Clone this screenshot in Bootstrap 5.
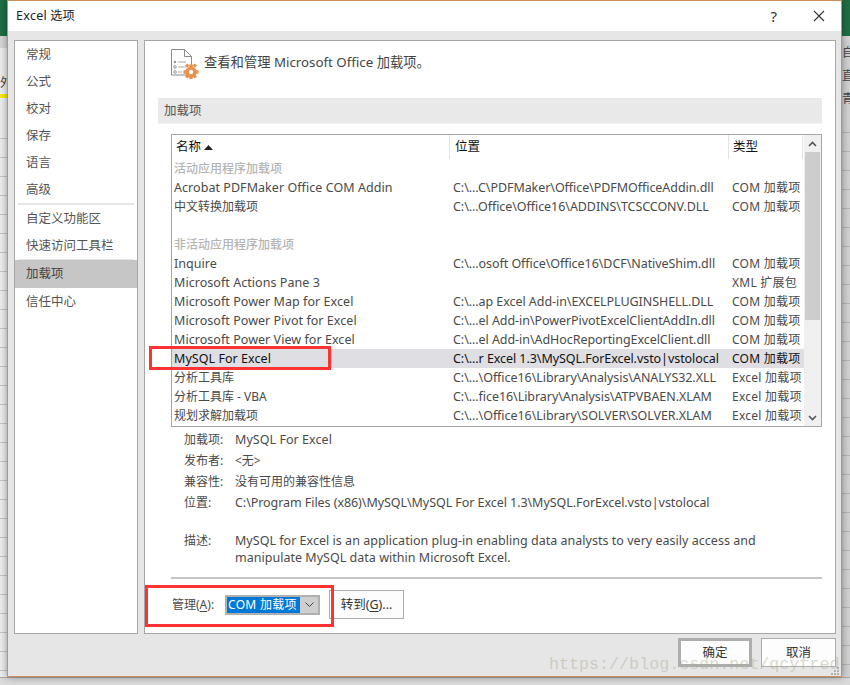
<!DOCTYPE html>
<html lang="zh"><head><meta charset="utf-8"><title>Excel 选项</title>
<link href="https://cdn.jsdelivr.net/npm/bootstrap@5.3.0/dist/css/bootstrap.min.css" rel="stylesheet">
<style>
html,body{margin:0;height:685px;overflow:hidden;background:#e9e9e9}
body{font-family:"Noto Sans","Noto Sans CJK SC",sans-serif;font-size:12px;color:#4a4a4a}
.lt{font-size:12.5px;letter-spacing:.05px}
.lp{font-size:12.5px;letter-spacing:-.06px}
.ld{font-size:12.5px;letter-spacing:.02px}
.stage{width:850px;height:685px;position:relative;overflow:hidden}
.upper{height:677px}
.strip-l{width:7px}.strip-r{width:8px}
.s-green{height:36px;background:#1f6e43}
.s-head{height:12px;background:#d4d4d4}
.s-head2{height:5px;background:#d4d4d4}
.s-grid{flex:1;background:repeating-linear-gradient(#ececec 0 18px,#c4c4c4 18px 19px)}
.s-yellow{height:4px;background:#f5e800}
.s-w{height:22px;background:#ececec}
.s-txt{height:23px;font-size:12px;line-height:23px;background:#cfcfcf;color:#444;white-space:nowrap;overflow:hidden}
.s-txt2{height:24px;line-height:26px;background:#ececec}
.s-gap{height:4px;background:#cfcfcf}
.s-rest{flex:1;background:repeating-linear-gradient(#d0d0d0 0 18px,#b4b4b4 18px 19px)}
.bottom{height:8px;background:#d9d9d9;border-top:1px solid #a8a8a8}
.dlg{width:835px;background:#e6e6e6;border:1px solid #d38b59;box-shadow:0 0 7px rgba(0,0,0,.4);position:relative;z-index:1}
.tbar{height:30px;background:#fff;color:#222}
.ttl{padding-left:8px;font-size:12.2px}
.ttl .lt{letter-spacing:.3px}
.tbtn{font-size:15px;color:#333;line-height:1;margin-right:36px}
.tbtn-x{margin-right:16px;display:block}
.bodyarea{padding:9px 5px 0 6px;gap:6px}
.lpanel{width:124px;height:594px;background:#fff;border:1px solid #a6a6a6}
.nitem{height:27px;line-height:27px;padding-left:11px;color:#555;font-size:12.5px}
.nitem.on{height:28px;line-height:28px;background:#c6c6c6;color:#444}
.nsep{height:2px;background:#e6e6e6;margin:0 3px}
.nsep1{height:1px;background:#e6e6e6;margin:0 3px}
.rpanel{flex:1;height:594px;background:#fff;border:1px solid #a6a6a6}
.hrow{margin:8px 0 19px 26px;height:30px;gap:5px;font-size:13.3px;color:#444}
.htext{margin-bottom:3px}
.secbar{height:26px;margin:0 13px;background:#e9e9e9;border-bottom:1px solid #f2f2f2;line-height:25px;padding-left:6px;color:#555;font-size:12.5px}
.lbox{height:293px;margin:10px 13px 0 26px;border:1px solid #a6a6a6;position:relative}
.lmain{width:632px}
.lhead{height:24px;line-height:24px;color:#111;font-size:12.5px}
.hc1{width:278px;padding-left:4px;border-right:1px solid #e3e3e3}
.hc2{width:279px;padding-left:5px;border-right:1px solid #e3e3e3}
.hc3{width:74px;padding-left:4px;border-right:1px solid #e3e3e3}
.lrow{height:19px;line-height:19px;padding-left:2px;white-space:nowrap}
.lrow.sel{background:#dfdee2;color:#111}
.c1{width:279px}.c2{width:279px}.c3{width:71px;overflow:hidden;letter-spacing:.25px}
.grp{color:#b4b4b4;font-weight:500}
.sbar{width:17px;background:#f0f0f0}
.sarrow{height:17px}
.sthumb{height:168px;background:#cdcdcd;margin:0 1px}
.sfill{flex:1}
.dets{margin:2px 20px 0 39px}
.drow{height:21px;line-height:21px}
.dk{width:51px;flex:none}
.ddesc{margin-top:19px}
.ddesc .dv,.ddesc .dk{line-height:17px}
.rule{height:2px;background:#c4c4c4;margin:11px 13px 0 26px}
.mgr{margin:11px 0 0 27px;height:29px}
.mgrl{width:53px}
.combo{width:95px;height:20px;border:2px solid #b0b0b0;background:#fff}
.cval{width:73px;height:16px;background:#0078d7;color:#fff;line-height:16px;padding-left:1px;white-space:nowrap;overflow:hidden;letter-spacing:.3px}
.cbtn{flex:1;background:#cfcfcf}
.btn.wbtn{border:1px solid #adadad;border-radius:0;background:#fdfdfd;color:#333;font-size:12.5px;padding:0;height:29px;line-height:26px;width:75px}
.btn.gobtn{margin-left:9px}
.btn.okb{border-width:3px;width:74px;line-height:22px}
.foot{margin-top:4px;padding-right:5px;gap:9px}
.redbox{position:absolute;border:3px solid #ff3333;z-index:3;pointer-events:none}
.rb1{left:149px;top:346px;width:182px;height:24px}
.rb2{left:145px;top:585px;width:189px;height:42px}
.wmark{position:absolute;left:549px;top:655px;font-family:"Liberation Mono",monospace;font-size:16.7px;color:rgba(170,170,150,.45);z-index:4;white-space:nowrap;line-height:20px}
.grip{position:absolute;right:1px;bottom:0;z-index:2}
u{text-underline-offset:2px}
</style></head><body>
<div class="stage d-flex flex-column">
 <div class="upper d-flex">
  <div class="strip-l d-flex flex-column">
   <div class="s-green"></div><div class="s-head"></div><div class="s-w"></div><div class="s-txt s-txt2">外</div><div class="s-yellow"></div><div class="s-w"></div><div class="s-grid"></div>
  </div>
  <div class="dlg d-flex flex-column">
   <div class="tbar d-flex align-items-center justify-content-between">
    <div class="ttl"><span class="lt">Excel</span> 选项</div>
    <div class="d-flex align-items-center">
     <span class="tbtn">?</span>
     <svg class="tbtn-x" width="12" height="12" viewBox="0 0 12 12"><path d="M1 1l10 10M11 1L1 11" stroke="#333" stroke-width="1.1" fill="none"/></svg>
    </div>
   </div>
   <div class="bodyarea d-flex">
    <div class="lpanel">
     <div class="nitem">常规</div><div class="nitem">公式</div><div class="nitem">校对</div><div class="nitem">保存</div><div class="nitem">语言</div><div class="nitem">高级</div>
     <div class="nsep"></div>
     <div class="nitem">自定义功能区</div><div class="nitem">快速访问工具栏</div>
     <div class="nsep1"></div>
     <div class="nitem on">加载项</div><div class="nitem">信任中心</div>
    </div>
    <div class="rpanel">
     <div class="hrow d-flex align-items-center">
      <svg width="28" height="30" viewBox="0 0 28 30"><path d="M.5.5h13l7 7V26H.5z M13.5.5v7h7" fill="#fff" stroke="#8a8a8a"/><circle cx="4" cy="13" r="1.3" fill="#999"/><circle cx="4" cy="18" r="1.3" fill="none" stroke="#999"/><circle cx="4" cy="23" r="1.3" fill="none" stroke="#999"/><path d="M7 13h8M7 18h8M7 23h4" stroke="#aaa"/><g fill="#e8914a"><circle cx="20" cy="23" r="5.6"/><path d="M18.3 15.5h3.4v3h-3.4zM18.3 27.5h3.4v3h-3.4zM12.5 21.3h3v3.4h-3zM24.5 21.3h3v3.4h-3zM14 16.4l2.4-2 2 2.4-2.4 2zM21.6 27.2l2.4-2 2 2.4-2.4 2zM26 16.4l-2.4-2-2 2.4 2.4 2zM18.4 27.2L16 25.2l-2 2.4 2.4 2z"/></g><circle cx="20" cy="23" r="2.2" fill="#fff"/></svg>
      <div class="htext">查看和管理 Microsoft Office 加载项。</div>
     </div>
     <div class="secbar">加载项</div>
     <div class="lbox d-flex">
      <div class="lmain">
       <div class="lhead d-flex"><div class="hc1">名称 <svg width="9" height="5" viewBox="0 0 9 5" class="align-middle"><path d="M4.5 0L9 5H0z" fill="#222"/></svg></div><div class="hc2">位置</div><div class="hc3">类型</div></div>
       <div class="lrow grp">活动应用程序加载项</div>
       <div class="lrow d-flex"><div class="c1 lt">Acrobat PDFMaker Office COM Addin</div><div class="c2 lp">C:\...C\PDFMaker\Office\PDFMOfficeAddin.dll</div><div class="c3">COM 加载项</div></div>
       <div class="lrow d-flex"><div class="c1">中文转换加载项</div><div class="c2 lp">C:\...Office\Office16\ADDINS\TCSCCONV.DLL</div><div class="c3">COM 加载项</div></div>
       <div class="lrow"></div>
       <div class="lrow grp">非活动应用程序加载项</div>
       <div class="lrow d-flex"><div class="c1 lt">Inquire</div><div class="c2 lp">C:\...osoft Office\Office16\DCF\NativeShim.dll</div><div class="c3">COM 加载项</div></div>
       <div class="lrow d-flex"><div class="c1 lt">Microsoft Actions Pane 3</div><div class="c2"></div><div class="c3">XML 扩展包</div></div>
       <div class="lrow d-flex"><div class="c1 lt">Microsoft Power Map for Excel</div><div class="c2 lp">C:\...ap Excel Add-in\EXCELPLUGINSHELL.DLL</div><div class="c3">COM 加载项</div></div>
       <div class="lrow d-flex"><div class="c1 lt">Microsoft Power Pivot for Excel</div><div class="c2 lp">C:\...el Add-in\PowerPivotExcelClientAddIn.dll</div><div class="c3">COM 加载项</div></div>
       <div class="lrow d-flex"><div class="c1 lt">Microsoft Power View for Excel</div><div class="c2 lp">C:\...el Add-in\AdHocReportingExcelClient.dll</div><div class="c3">COM 加载项</div></div>
       <div class="lrow sel d-flex"><div class="c1 lt">MySQL For Excel</div><div class="c2 lp">C:\...r Excel 1.3\MySQL.ForExcel.vsto|vstolocal</div><div class="c3">COM 加载项</div></div>
       <div class="lrow d-flex"><div class="c1">分析工具库</div><div class="c2 lp">C:\...\Office16\Library\Analysis\ANALYS32.XLL</div><div class="c3">Excel 加载项</div></div>
       <div class="lrow d-flex"><div class="c1">分析工具库 - VBA</div><div class="c2 lp">C:\...fice16\Library\Analysis\ATPVBAEN.XLAM</div><div class="c3">Excel 加载项</div></div>
       <div class="lrow d-flex"><div class="c1">规划求解加载项</div><div class="c2 lp">C:\...\Office16\Library\SOLVER\SOLVER.XLAM</div><div class="c3">Excel 加载项</div></div>
      </div>
      <div class="sbar d-flex flex-column">
       <div class="sarrow d-flex align-items-center justify-content-center"><svg width="9" height="6" viewBox="0 0 9 6"><path d="M1 5l3.5-3.5L8 5" stroke="#555" stroke-width="1.6" fill="none"/></svg></div>
       <div class="sthumb"></div>
       <div class="sfill"></div>
       <div class="sarrow d-flex align-items-center justify-content-center"><svg width="9" height="6" viewBox="0 0 9 6"><path d="M1 1l3.5 3.5L8 1" stroke="#555" stroke-width="1.6" fill="none"/></svg></div>
      </div>
     </div>
     <div class="dets">
      <div class="drow d-flex"><div class="dk">加载项:</div><div class="dv lt">MySQL For Excel</div></div>
      <div class="drow d-flex"><div class="dk">发布者:</div><div class="dv">&lt;无&gt;</div></div>
      <div class="drow d-flex"><div class="dk">兼容性:</div><div class="dv">没有可用的兼容性信息</div></div>
      <div class="drow d-flex"><div class="dk">位置:</div><div class="dv lp">C:\Program Files (x86)\MySQL\MySQL For Excel 1.3\MySQL.ForExcel.vsto|vstolocal</div></div>
      <div class="ddesc d-flex"><div class="dk">描述:</div><div class="dv ld">MySQL for Excel is an application plug-in enabling data analysts to very easily access and manipulate MySQL data within Microsoft Excel.</div></div>
     </div>
     <div class="rule"></div>
     <div class="mgr d-flex align-items-center">
      <div class="mgrl">管理(<u>A</u>):</div>
      <div class="combo d-flex"><div class="cval">COM 加载项</div><div class="cbtn d-flex align-items-center justify-content-center"><svg width="9" height="5" viewBox="0 0 9 5"><path d="M.5.5l4 4 4-4" stroke="#444" fill="none"/></svg></div></div>
      <button class="btn wbtn gobtn" type="button">转到(<u>G</u>)...</button>
     </div>
    </div>
   </div>
   <div class="foot d-flex justify-content-end">
    <button class="btn wbtn okb" type="button">确定</button>
    <button class="btn wbtn" type="button">取消</button>
   </div>
   <svg class="grip" width="10" height="10" viewBox="0 0 10 10"><g fill="#b0b0b0"><path d="M7 1h2v2H7zM4 4h2v2H4zM7 4h2v2H7zM1 7h2v2H1zM4 7h2v2H4zM7 7h2v2H7z"/></g></svg>
  </div>
  <div class="strip-r d-flex flex-column">
   <div class="s-green"></div><div class="s-head2"></div><div class="s-txt">自</div><div class="s-txt">直</div><div class="s-txt">青</div><div class="s-gap"></div><div class="s-rest"></div>
  </div>
 </div>
 <div class="bottom"></div>
 <div class="redbox rb1"></div>
 <div class="redbox rb2"></div>
 <div class="wmark">https://blog.csdn.net/qcyfred</div>
</div>
<script src="https://cdn.jsdelivr.net/npm/bootstrap@5.3.0/dist/js/bootstrap.bundle.min.js"></script>
</body></html>
